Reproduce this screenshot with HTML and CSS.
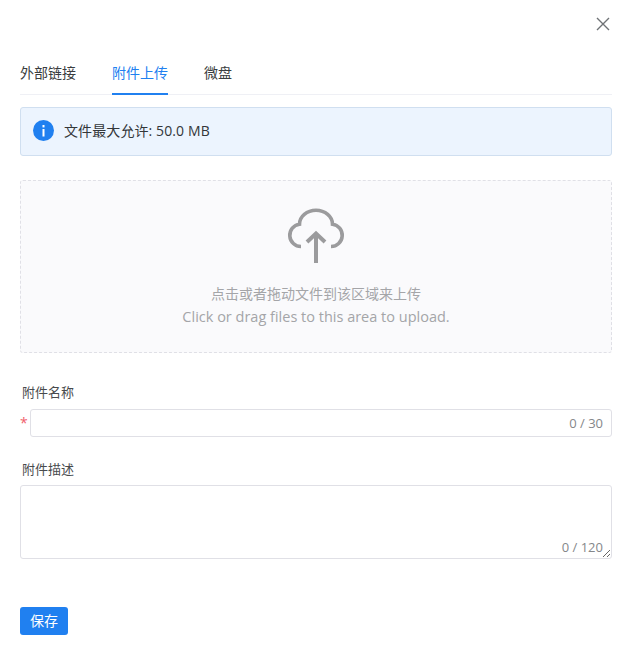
FILE: index.html
```html
<!DOCTYPE html>
<html lang="zh-CN">
<head>
<meta charset="utf-8">
<title>附件上传</title>
<link rel="stylesheet" href="styles.css">
</head>
<body>
<main class="modal">
  <button class="close" aria-label="关闭">
    <svg width="14" height="14" viewBox="0 0 14 14"><path d="M1 1L13 13M13 1L1 13" stroke="#6f7276" stroke-width="1.4" fill="none"/></svg>
  </button>
  <nav class="tabs">
    <a class="tab">外部链接</a>
    <a class="tab active">附件上传</a>
    <a class="tab">微盘</a>
  </nav>
  <div class="alert">
    <svg class="alert-icon" width="21" height="21" viewBox="0 0 21 21"><circle cx="10.500" cy="10.500" r="10.500" fill="#2080f0"/><rect x="9.500" y="9" width="2" height="7.500" fill="#fff"/><rect x="9.500" y="5" width="2" height="2.400" fill="#fff"/></svg>
    <span class="alert-text">文件最大允许: 50.0 MB</span>
  </div>
  <div class="drop">
    <svg class="cloud" width="58" height="56" viewBox="0 0 58 56" fill="none" stroke="#9b9b9d" stroke-width="3.600">
      <path d="M14 38.500A11.200 11.200 0 0 1 12.500 16.200A16.500 14 0 0 1 45.500 16.200A11.200 11.200 0 0 1 44 38.500"/>
      <path d="M29 55V26M20 34L29 25.500L38 34" stroke-width="4"/>
    </svg>
    <p class="drop-zh">点击或者拖动文件到该区域来上传</p>
    <p class="drop-en">Click or drag files to this area to upload.</p>
  </div>
  <section class="field first">
    <label class="label">附件名称</label>
    <div class="input-row">
      <span class="star">*</span>
      <div class="input-box">
        <input class="input" type="text">
        <span class="count">0 / 30</span>
      </div>
    </div>
  </section>
  <section class="field second">
    <label class="label">附件描述</label>
    <div class="area-box">
      <textarea class="area"></textarea>
      <span class="count area-count">0 / 120</span>
    </div>
  </section>
  <button class="save">保存</button>
</main>
</body>
</html>
```
FILE: styles.css
```css
* { box-sizing: border-box; }
html, body { margin: 0; background: #fff; }
body {
  font-family: "Open Sans", "Noto Sans CJK SC", sans-serif;
  font-size: 14px;
  color: #333639;
}
.modal { position: relative; width: 634px; height: 671px; padding: 52px 22px 0 20px; }
.close {
  position: absolute; top: 17px; right: 24px;
  width: 14px; height: 14px; padding: 0; border: 0; background: none; display: block;
}
.close svg { display: block; }
.tabs { display: flex; gap: 36px; height: 43px; border-bottom: 1px solid #eff0f5; }
.tab { height: 43px; line-height: 42px; font-size: 14px; color: #3a3d40; }
.tab.active { color: #2080f0; border-bottom: 2px solid #2080f0; }
.alert {
  display: flex; align-items: center; gap: 10px;
  margin-top: 12px; height: 49px; padding: 0 0 3px 12px;
  background: #ecf4fe; border: 1px solid #d0dff0; border-radius: 3px;
  font-size: 14px;
}
.alert-icon { flex: none; }
.alert-text { letter-spacing: 0.1px; }
.drop {
  margin-top: 24px; height: 173px; padding-top: 27px;
  background: #fafafc; border: 1px dashed #e0e0e6; border-radius: 3px;
  display: flex; flex-direction: column; align-items: center;
  color: #a4a5a8;
}
.cloud { display: block; }
.drop p { margin: 0; }
.drop .drop-zh { margin-top: 19px; line-height: 22px; font-size: 14px; }
.drop .drop-en { margin-top: 1px; line-height: 22px; font-size: 14.5px; }
.field { display: flex; flex-direction: column; }
.field.first { margin-top: 29px; }
.field.second { margin-top: 22px; }
.label { padding-left: 2px; line-height: 20px; height: 20px; font-size: 13px; color: #484a4d; }
.input-row { display: flex; align-items: center; margin-top: 7px; }
.star { width: 10px; flex: none; color: #f0606d; font-size: 14px; line-height: 20px; }
.input-box { position: relative; flex: 1; height: 28px; }
.input, .area {
  display: block; width: 100%; height: 100%; margin: 0; padding: 0 10px;
  background: #fff; border: 1px solid #e0e0e6; border-radius: 3px; outline: none;
}
.count { position: absolute; right: 9px; top: 0; line-height: 28px; font-size: 13px; color: #85878a; }
.area-box { position: relative; height: 74px; margin-top: 6px; }
.area { resize: vertical; }
.area-count { top: auto; bottom: 0; right: 9px; line-height: 24px; }
.save {
  display: block; width: 48px; height: 28px; margin-top: 48px; padding: 0 0 2px;
  background: #2080f0; color: #fff; border: 0; border-radius: 3px;
  font: inherit; font-size: 14px;
}
```
